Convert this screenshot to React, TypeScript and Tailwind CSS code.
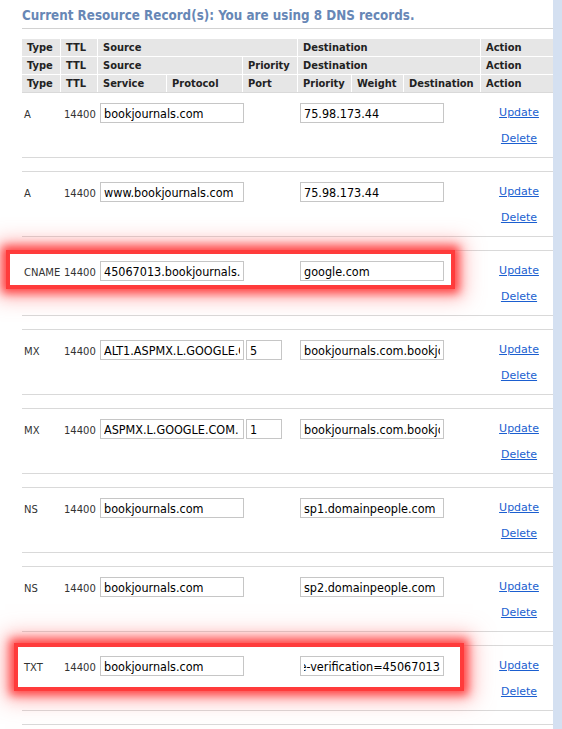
import React from 'react';

interface DnsRecord {
  type: string;
  ttl: number;
  source: string;
  priority?: string;
  destination: string;
  scrollEnd?: boolean;
}

const records: DnsRecord[] = [
  { type: 'A', ttl: 14400, source: 'bookjournals.com', destination: '75.98.173.44' },
  { type: 'A', ttl: 14400, source: 'www.bookjournals.com', destination: '75.98.173.44' },
  { type: 'CNAME', ttl: 14400, source: '45067013.bookjournals.com', destination: 'google.com' },
  { type: 'MX', ttl: 14400, source: 'ALT1.ASPMX.L.GOOGLE.COM.', priority: '5', destination: 'bookjournals.com.bookjournals.com.' },
  { type: 'MX', ttl: 14400, source: 'ASPMX.L.GOOGLE.COM.', priority: '1', destination: 'bookjournals.com.bookjournals.com.' },
  { type: 'NS', ttl: 14400, source: 'bookjournals.com', destination: 'sp1.domainpeople.com' },
  { type: 'NS', ttl: 14400, source: 'bookjournals.com', destination: 'sp2.domainpeople.com' },
  { type: 'TXT', ttl: 14400, source: 'bookjournals.com', destination: 'google-site-verification=45067013', scrollEnd: true },
];

const condensed = "font-['DejaVu_Sans_Condensed','DejaVu_Sans',sans-serif] font-stretch-condensed";
const wide = "font-['DejaVu_Sans','Verdana',sans-serif]";

// header cell
const th = `h-[17px] bg-[#e6e6e6] pl-[5px] text-[11px] leading-[17px] font-bold text-[#222] whitespace-nowrap ${condensed}`;

const inputCls = `h-[20px] border border-[#c6c6c6] bg-white px-[3px] text-[12.5px] text-black outline-none ${condensed}`;

const glow =
  'pointer-events-none absolute shadow-[0_0_0_4px_#ff3b3b,0_0_9px_8px_#ff4444,0_0_20px_13px_rgba(255,110,110,0.5)]';

function RecordRow({ rec }: { rec: DnsRecord }) {
  return (
    <div className="h-[66px] border-y border-[#d9d9d9] mb-[13px] flex items-start">
      <div className={`w-[40px] pl-[2px] mt-[12px] h-[20px] leading-[20px] text-[10px] text-[#333] ${wide}`}>{rec.type}</div>
      <div className={`w-[38px] pl-[2px] mt-[12px] h-[20px] leading-[20px] text-[10px] text-[#333] ${wide}`}>{rec.ttl}</div>
      <input readOnly defaultValue={rec.source} className={`${inputCls} mt-[10px] w-[144px]`} />
      {rec.priority ? (
        <>
          <input readOnly defaultValue={rec.priority} className={`${inputCls} mt-[10px] ml-[2px] w-[36px]`} />
          <input readOnly defaultValue={rec.destination} className={`${inputCls} mt-[10px] ml-[18px] w-[144px]`} />
        </>
      ) : (
        <input
          readOnly
          defaultValue={rec.destination}
          ref={(el) => {
            if (el && rec.scrollEnd) el.scrollLeft = el.scrollWidth;
          }}
          className={`${inputCls} mt-[10px] ml-[56px] w-[144px]`}
        />
      )}
      <div className={`ml-auto w-[68px] pt-[13px] flex flex-col items-center text-[11px] leading-[14px] ${wide}`}>
        <a href="#" className="text-[#1b5fd0] underline">Update</a>
        <a href="#" className="mt-[12px] text-[#1b5fd0] underline">Delete</a>
      </div>
    </div>
  );
}

export default function App() {
  return (
    <div className="relative flex min-h-screen bg-white overflow-hidden">
      <div className="w-[553px] shrink-0 pl-[22px]">
        {/* Title */}
        <div className={`pt-[8px] pb-[4px] border-b border-[#d2d2d2] text-[13.3px] leading-[16px] font-bold text-[#6787b6] ${condensed}`}>
          Current Resource Record(s): You are using 8 DNS records.
        </div>

        {/* Column headers */}
        <div className="mt-[10px] grid grid-cols-[38px_36px_68px_75px_54px_53px_51px_76px_72px] gap-px">
          <div className={th}>Type</div>
          <div className={th}>TTL</div>
          <div className={`${th} col-span-3`}>Source</div>
          <div className={`${th} col-span-3`}>Destination</div>
          <div className={th}>Action</div>

          <div className={th}>Type</div>
          <div className={th}>TTL</div>
          <div className={`${th} col-span-2`}>Source</div>
          <div className={th}>Priority</div>
          <div className={`${th} col-span-3`}>Destination</div>
          <div className={th}>Action</div>

          <div className={th}>Type</div>
          <div className={th}>TTL</div>
          <div className={th}>Service</div>
          <div className={th}>Protocol</div>
          <div className={th}>Port</div>
          <div className={th}>Priority</div>
          <div className={th}>Weight</div>
          <div className={th}>Destination</div>
          <div className={th}>Action</div>
        </div>

        {/* Records */}
        <div>
          {records.map((rec, i) => (
            <RecordRow key={i} rec={rec} />
          ))}
          <div className="h-[40px] border-t border-[#d9d9d9]" />
        </div>
      </div>
      <div className="flex-1 bg-[#d4e0f1]" />

      {/* annotation highlights */}
      <div className={`${glow} left-[10px] top-[254px] w-[441px] h-[31px]`} />
      <div className={`${glow} left-[18px] top-[647px] w-[442px] h-[40px]`} />
    </div>
  );
}
